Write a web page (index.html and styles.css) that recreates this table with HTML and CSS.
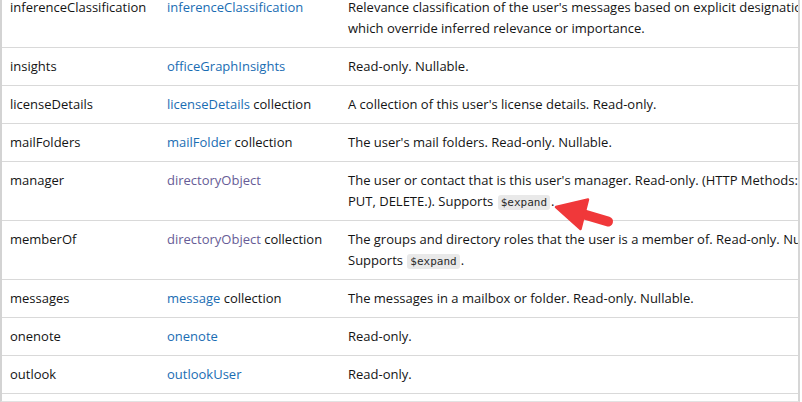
FILE: index.html
```html
<!DOCTYPE html>
<html lang="en">
<head>
<meta charset="utf-8">
<title>user relationships</title>
<link rel="stylesheet" href="styles.css">
</head>
<body>
<div class="frame">
  <table class="props">
    <colgroup>
      <col class="c-name">
      <col class="c-type">
      <col class="c-desc">
    </colgroup>
    <tbody>
      <tr>
        <td>inferenceClassification</td>
        <td><a class="link" href="#">inferenceClassification</a></td>
        <td>Relevance classification of the user's messages based on explicit designations, which override inferred relevance or importance.</td>
      </tr>
      <tr>
        <td>insights</td>
        <td><a class="link" href="#">officeGraphInsights</a></td>
        <td>Read-only. Nullable.</td>
      </tr>
      <tr>
        <td>licenseDetails</td>
        <td><a class="link" href="#">licenseDetails</a> collection</td>
        <td>A collection of this user's license details. Read-only.</td>
      </tr>
      <tr>
        <td>mailFolders</td>
        <td><a class="link" href="#">mailFolder</a> collection</td>
        <td>The user's mail folders. Read-only. Nullable.</td>
      </tr>
      <tr>
        <td>manager</td>
        <td><a class="link visited" href="#">directoryObject</a></td>
        <td>The user or contact that is this user's manager. Read-only. (HTTP Methods: GET, PUT, DELETE.). Supports <code class="chip">$expand</code>.</td>
      </tr>
      <tr>
        <td>memberOf</td>
        <td><a class="link visited" href="#">directoryObject</a> collection</td>
        <td>The groups and directory roles that the user is a member of. Read-only. Nullable. Supports <code class="chip">$expand</code>.</td>
      </tr>
      <tr>
        <td>messages</td>
        <td><a class="link" href="#">message</a> collection</td>
        <td>The messages in a mailbox or folder. Read-only. Nullable.</td>
      </tr>
      <tr>
        <td>onenote</td>
        <td><a class="link" href="#">onenote</a></td>
        <td>Read-only.</td>
      </tr>
      <tr>
        <td>outlook</td>
        <td><a class="link" href="#">outlookUser</a></td>
        <td>Read-only.</td>
      </tr>
      <tr>
        <td>ownedDevices</td>
        <td><a class="link visited" href="#">directoryObject</a> collection</td>
        <td>Devices that are owned by the user. Read-only. Nullable.</td>
      </tr>
    </tbody>
  </table>
  <svg class="arrow" width="802" height="402" viewBox="0 0 802 402" aria-hidden="true">
    <line x1="581" y1="213.5" x2="608" y2="221.5" stroke="#f0383a" stroke-width="10" stroke-linecap="round"/>
    <polygon points="556,207 588,199.5 580.5,229" fill="#f0383a" stroke="#f0383a" stroke-width="2.5" stroke-linejoin="round"/>
  </svg>
</div>
</body>
</html>
```
FILE: styles.css
```css
html, body {
  margin: 0;
  padding: 0;
  background: #ffffff;
}

.frame {
  position: relative;
  box-sizing: border-box;
  width: 800px;
  height: 402px;
  overflow: hidden;
  border-left: 2px solid #d3d3d3;
  border-right: 2px solid #d6d6d6;
  border-bottom: 1px solid #e2e2e2;
  font-family: "Open Sans", "Noto Sans", sans-serif;
  font-size: 13px;
  line-height: 21px;
  color: #141414;
}

.props {
  margin-top: -11px;
  width: 856px;
  table-layout: fixed;
  border-collapse: collapse;
}

.c-name { width: 157px; }
.c-type { width: 179px; }
.c-desc { width: 520px; }

.props td {
  padding: 8px 8px;
  vertical-align: top;
  border-bottom: 1px solid #d9d9d9;
  text-align: left;
}

.props td:nth-child(3) {
  padding-left: 10px;
}

.link {
  color: #1a6db3;
  text-decoration: none;
}

.link.visited {
  color: #675c96;
}

.chip {
  font-family: "DejaVu Sans Mono", "Liberation Mono", monospace;
  font-size: 11px;
  line-height: 16px;
  background: #e9e9e9;
  color: #2a2a2a;
  border-radius: 3px;
  padding: 1px 3px;
  margin-left: 1px;
  margin-right: 1px;
}

.arrow {
  position: absolute;
  left: -2px;
  top: 0;
  pointer-events: none;
}
```
